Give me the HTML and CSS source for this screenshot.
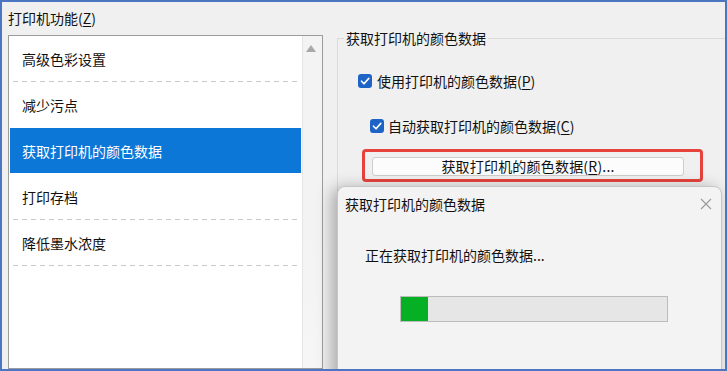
FILE: index.html
```html
<!DOCTYPE html>
<html lang="zh-CN">
<head>
  <meta charset="UTF-8">
  <title>打印机功能</title>
  <link rel="stylesheet" href="styles.css">
</head>
<body>
  <div class="window">
    <div class="features">
      <div class="features-label">打印机功能(<u>Z</u>)</div>
      <div class="listbox">
        <ul class="list">
          <li class="item sep">高级色彩设置</li>
          <li class="item">减少污点</li>
          <li class="item selected">获取打印机的颜色数据</li>
          <li class="item sep">打印存档</li>
          <li class="item sep">降低墨水浓度</li>
        </ul>
        <div class="scrollbar"><span class="arrow-up"></span></div>
      </div>
    </div>

    <div class="panel">
      <fieldset class="group">
        <legend>获取打印机的颜色数据</legend>
        <label class="check first">
          <span class="box"><svg width="14" height="14" viewBox="0 0 14 14"><polyline points="3.5,7.2 6,9.8 10.8,4.4" fill="none" stroke="#fff" stroke-width="1.6" stroke-linecap="round" stroke-linejoin="round"/></svg></span>
          <span>使用打印机的颜色数据(<u>P</u>)</span>
        </label>
        <label class="check second">
          <span class="box"><svg width="14" height="14" viewBox="0 0 14 14"><polyline points="3.5,7.2 6,9.8 10.8,4.4" fill="none" stroke="#fff" stroke-width="1.6" stroke-linecap="round" stroke-linejoin="round"/></svg></span>
          <span>自动获取打印机的颜色数据(<u>C</u>)</span>
        </label>
        <div class="highlight">
          <button class="get-btn">获取打印机的颜色数据(<u>R</u>)...</button>
        </div>
      </fieldset>
    </div>

    <!-- 进度对话框 -->
    <div class="dialog">
      <div class="dialog-title">
        <span>获取打印机的颜色数据</span>
        <svg class="close" width="12" height="12" viewBox="0 0 12 12"><path d="M1 1 L11 11 M11 1 L1 11" stroke="#9a9a9a" stroke-width="1.1" fill="none"/></svg>
      </div>
      <div class="dialog-msg">正在获取打印机的颜色数据...</div>
      <div class="progress"><div class="progress-fill" style="width: 27px"></div></div>
    </div>
  </div>
</body>
</html>
```

FILE: styles.css
```css
body {
  margin: 0;
  padding: 0;
  font-family: "Noto Sans CJK SC", "Noto Sans", sans-serif;
  font-size: 14px;
  color: #111;
}

.window {
  position: relative;
  width: 727px;
  height: 371px;
  box-sizing: border-box;
  border: 2px solid #4a76c2;
  background-color: #f0f0f0;
  display: flex;
  overflow: hidden;
}

u {
  text-decoration-thickness: 1px;
  text-underline-offset: 2px;
}

/* 左侧：打印机功能列表 */
.features {
  width: 321px;
  flex-shrink: 0;
  padding: 6px 0 0 6px;
  box-sizing: border-box;
  display: flex;
  flex-direction: column;
}

.features-label {
  line-height: 21px;
  height: 21px;
}

.listbox {
  margin-top: 6px;
  width: 315px;
  height: 360px;
  box-sizing: border-box;
  border: 1px solid #9c9c9c;
  background-color: #fff;
  display: flex;
}

.list {
  list-style: none;
  margin: 0;
  padding: 0 1px;
  flex: 1;
}

.item {
  height: 46px;
  line-height: 47px;
  padding-left: 12px;
  color: #111;
}

.item.sep {
  background: repeating-linear-gradient(to right, #c9c9c9 0 5px, transparent 5px 9px) left 3px bottom 0 / calc(100% - 4px) 1px no-repeat;
}

.item.selected {
  background-color: #0c77d6;
  color: #fff;
  height: 45px;
  line-height: 47px;
  margin-bottom: 1px;
}

.scrollbar {
  width: 19px;
  flex-shrink: 0;
  background: linear-gradient(to bottom, #f3f3f3 0, #f3f3f3 60%, #f6f6f6 100%);
  border-left: 1px solid #e6e6e6;
}

.arrow-up {
  display: block;
  width: 0;
  height: 0;
  margin: 9px 0 0 3px;
  border-left: 5px solid transparent;
  border-right: 5px solid transparent;
  border-bottom: 7px solid #a8a8a8;
}

/* 右侧：颜色数据设置 */
.panel {
  flex: 1;
  padding: 26px 0 0 14px;
  min-width: 0;
}

.group {
  margin: 0 -20px 0 0;
  padding: 0 0 0 6px;
  height: 400px;
  border: 1px solid #dadada;
  min-width: 0;
}

.group legend {
  padding: 0 2px;
  line-height: 20px;
  color: #111;
}

.check {
  display: flex;
  align-items: center;
  gap: 5px;
  line-height: 20px;
  white-space: nowrap;
}

.check.first {
  margin: 23px 0 0 14px;
}

.check.second {
  margin: 25px 0 0 26px;
  gap: 4px;
}

.box {
  width: 14px;
  height: 14px;
  border-radius: 3px;
  background-color: #1e63c6;
  display: inline-flex;
}

.highlight {
  margin: 13px 0 0 18px;
  width: 341px;
  height: 33px;
  box-sizing: border-box;
  border: 3px solid #e5433c;
  border-radius: 4px;
  padding: 4px 0 0 7px;
}

.get-btn {
  width: 312px;
  height: 19px;
  padding: 0;
  border: 1px solid #cdcdcd;
  border-radius: 3px;
  background-color: #fcfcfc;
  font-family: "Noto Sans CJK SC", "Noto Sans", sans-serif;
  font-size: 14px;
  line-height: 17px;
  color: #111;
  text-align: center;
  letter-spacing: 0.2px;
}

/* 进度对话框 */
.dialog {
  position: absolute;
  left: 335px;
  top: 184px;
  width: 385px;
  height: 220px;
  box-sizing: border-box;
  border: 1px solid #c6c6c6;
  border-radius: 8px 8px 0 0;
  background-color: #f3f3f3;
  box-shadow: -5px 2px 16px rgba(0, 0, 0, 0.3);
}

.dialog-title {
  height: 33px;
  display: flex;
  align-items: center;
  justify-content: space-between;
  padding: 0 9px 0 7px;
}

.close {
  margin-top: 1px;
}

.dialog-msg {
  margin: 25px 0 0 27px;
  line-height: 20px;
}

.progress {
  margin: 31px 0 0 62px;
  width: 268px;
  height: 26px;
  box-sizing: border-box;
  border: 1px solid #bcbcbc;
  background-color: #e6e6e6;
}

.progress-fill {
  height: 100%;
  background-color: #06b025;
}
```
